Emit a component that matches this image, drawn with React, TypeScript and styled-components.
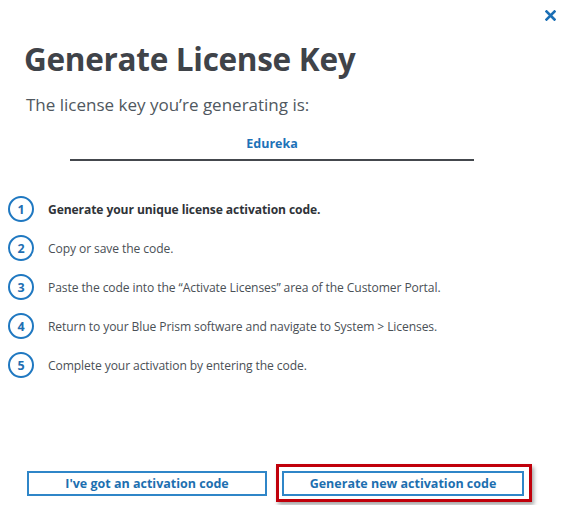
import { createGlobalStyle } from "styled-components";
import styled from "styled-components";

const GlobalStyle = createGlobalStyle`
  html, body {
    margin: 0;
    padding: 0;
    background: #ffffff;
  }
  body {
    font-family: "Open Sans", "Noto Sans", sans-serif;
  }
`;

const Dialog = styled.div`
  position: relative;
  width: 562px;
  height: 505px;
  box-sizing: border-box;
  display: flex;
  flex-direction: column;
  padding: 39px 0 0 0;
  background: #fff;
`;

const CloseButton = styled.button`
  position: absolute;
  top: 8px;
  right: 5px;
  width: 14px;
  height: 14px;
  padding: 0;
  border: none;
  background: transparent;
  cursor: pointer;
  display: flex;
  align-items: center;
  justify-content: center;
`;

const Title = styled.h1`
  margin: 0 0 0 24px;
  font-size: 31.5px;
  line-height: 40px;
  font-weight: 700;
  color: #3f4349;
  letter-spacing: -0.3px;
`;

const Subtitle = styled.p`
  margin: 15px 0 0 26px;
  font-size: 17px;
  line-height: 22px;
  color: #505860;
`;

const KeyField = styled.div`
  margin: 19px 0 0 70px;
  width: 404px;
  padding-bottom: 6px;
  border-bottom: 2px solid #44484d;
  text-align: center;
  font-size: 12.5px;
  font-weight: 700;
  color: #1d72b8;
  line-height: 18px;
`;

const Steps = styled.ol`
  list-style: none;
  margin: 35px 0 0 0;
  padding: 0 0 0 8px;
  display: flex;
  flex-direction: column;
  gap: 13px;
`;

const Step = styled.li`
  display: flex;
  align-items: center;
  gap: 14px;
  height: 26px;
`;

const StepNumber = styled.span`
  box-sizing: border-box;
  width: 26px;
  height: 26px;
  flex: none;
  border: 2px solid #1f78c1;
  border-radius: 50%;
  display: flex;
  align-items: center;
  justify-content: center;
  font-size: 12.5px;
  font-weight: 700;
  color: #1f6fb2;
`;

const StepText = styled.span<{ $strong?: boolean }>`
  font-size: 12.1px;
  color: ${(p) => (p.$strong ? "#2f3338" : "#4a5056")};
  font-weight: ${(p) => (p.$strong ? 700 : 400)};
  letter-spacing: -0.1px;
`;

const Footer = styled.div`
  margin-top: auto;
  padding: 0 0 3px 27px;
  display: flex;
  align-items: center;
  gap: 9px;
`;

const Focus = styled.div`
  padding: 4px 5px 3px 3px;
  border: 3px solid #c0000b;
  box-shadow: 2px 3px 4px rgba(0, 0, 0, 0.35);
  display: flex;
`;

const Button = styled.button<{ $width: number }>`
  box-sizing: border-box;
  width: ${(p) => p.$width}px;
  height: 25px;
  border: 2px solid #2f86c8;
  background: #fff;
  color: #1d6fb0;
  font-family: "Open Sans", "Noto Sans", sans-serif;
  font-size: 12.5px;
  font-weight: 700;
  cursor: pointer;
  padding: 0;
`;

const steps = [
  "Generate your unique license activation code.",
  "Copy or save the code.",
  "Paste the code into the \u201cActivate Licenses\u201d area of the Customer Portal.",
  "Return to your Blue Prism software and navigate to System > Licenses.",
  "Complete your activation by entering the code.",
];

const App = () => {
  return (
    <>
      <GlobalStyle />
      <Dialog>
        <CloseButton aria-label="Close">
          <svg width="11" height="11" viewBox="0 0 11 11">
            <path d="M1.5 1.5 L9.5 9.5 M9.5 1.5 L1.5 9.5" stroke="#1b6fb5" strokeWidth="2.6" strokeLinecap="square" />
          </svg>
        </CloseButton>
        <Title>Generate License Key</Title>
        <Subtitle>The license key you’re generating is:</Subtitle>
        <KeyField>Edureka</KeyField>
        <Steps>
          {steps.map((text, i) => (
            <Step key={i}>
              <StepNumber>{i + 1}</StepNumber>
              <StepText $strong={i === 0}>{text}</StepText>
            </Step>
          ))}
        </Steps>
        <Footer>
          <Button $width={240}>I've got an activation code</Button>
          <Focus>
            <Button $width={242}>Generate new activation code</Button>
          </Focus>
        </Footer>
      </Dialog>
    </>
  );
};

export default App;
